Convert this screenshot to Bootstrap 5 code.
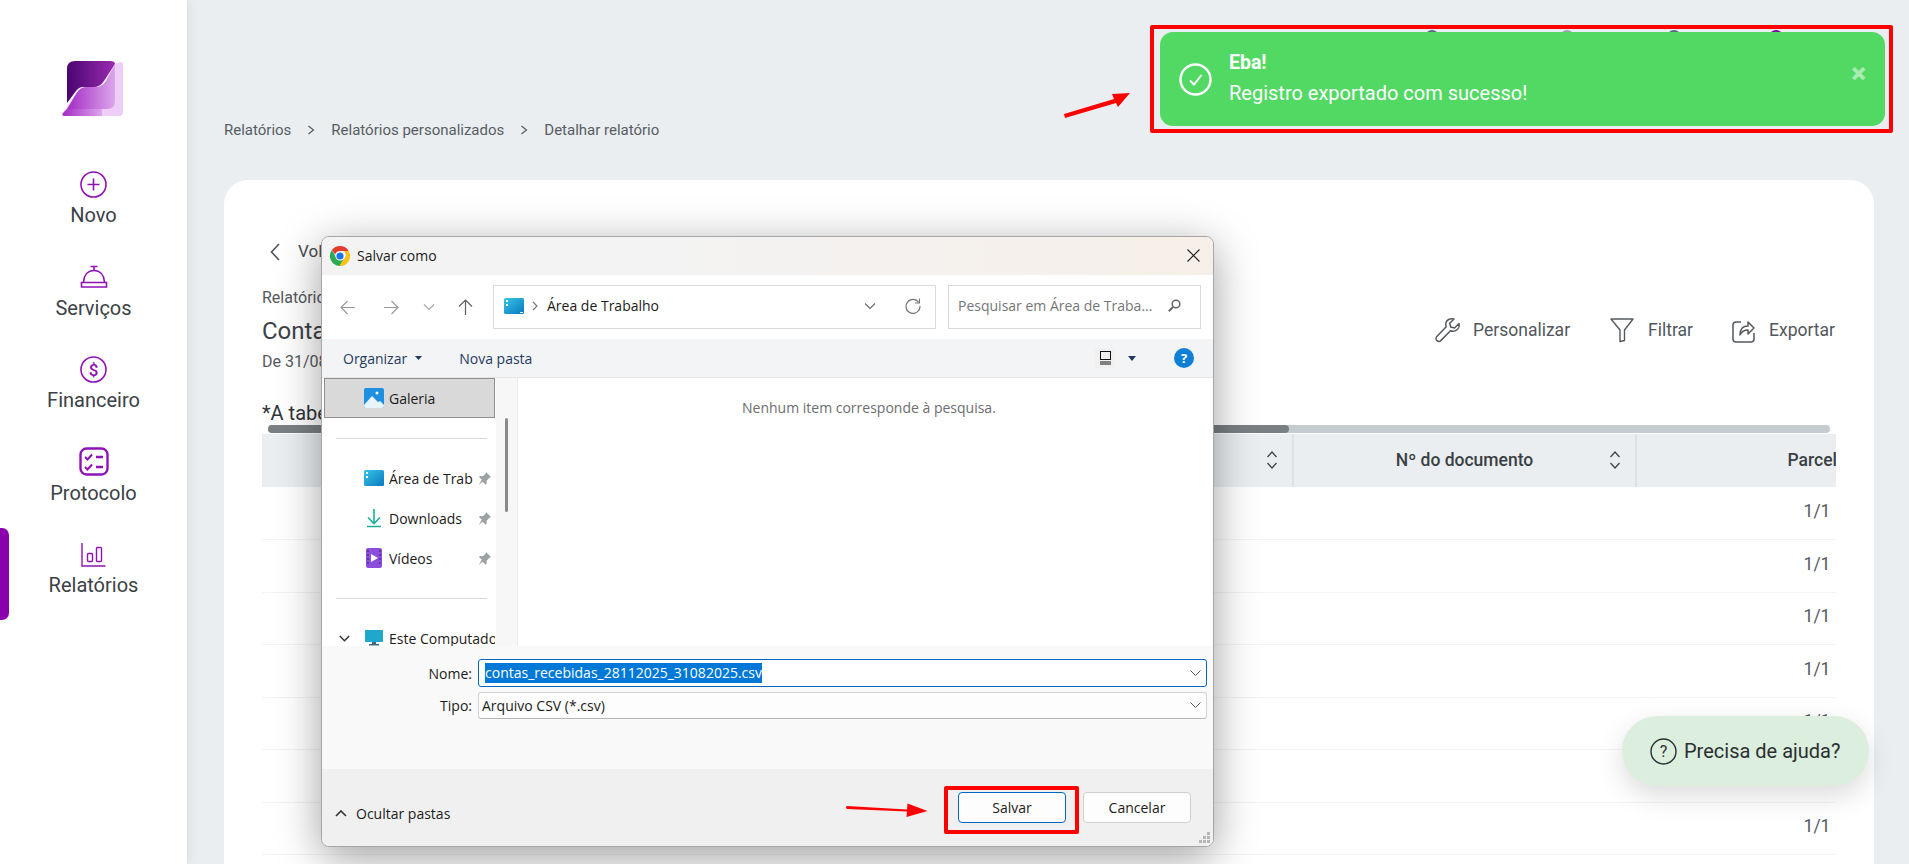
<!DOCTYPE html>
<html lang="pt-BR">
<head>
    <meta charset="UTF-8" />
    <title>Detalhar relatório</title>
    <link href="https://cdn.jsdelivr.net/npm/bootstrap@5.3.2/dist/css/bootstrap.min.css" rel="stylesheet">
    <style>
        html, body { height: 100%; }
        body { font-family: Roboto, "Liberation Sans", sans-serif; background: #eaeef1; overflow: hidden; color: #3d4248; }
        .app-shell { height: 864px; position: relative; overflow: hidden; }

        /* sidebar */
        .side-rail { width: 187px; flex: 0 0 187px; background: #fff; box-shadow: 3px 0 10px rgba(0,0,0,.06); padding-top: 61px; position: relative; z-index: 1; }
        .side-logo { width: 62px; height: 56px; display: block; margin: 0 auto 52px 62px; }
        .side-item { height: 92.5px; position: relative; }
        .side-icon { height: 30px; display: flex; align-items: center; justify-content: center; }
        .side-label { font-size: 20px; line-height: 24px; margin-top: 4px; color: #3c4146; }
        .side-active { position: absolute; left: 0; top: -11px; width: 9px; height: 92px; background: #8b00ad; border-radius: 0 7px 7px 0; }

        /* main */
        .main-area { flex: 0 0 1722px; width: 1722px; min-width: 0; padding-right: 35px; padding-left: 37px; }
        .peek-row { height: 29px; position: relative; }
        .peek-dot { position: absolute; top: 30px; width: 14px; height: 14px; border-radius: 50%; background: #5a6b80; }
        .peek-a { left: 1201px; }
        .peek-b { left: 1336px; background: #9aa3ab; }
        .peek-c { left: 1443px; }
        .peek-d { left: 1545px; background: #7a0c9c; }
        .crumbs { margin-top: 89px; height: 24px; font-size: 15px; color: #585d63; gap: 16px; }
        .report-panel { background: #fff; border-radius: 24px 24px 0 0; margin-top: 38px; height: 700px; padding: 60px 38px 0 38px; }
        .back-row { height: 24px; padding-left: 8px; font-size: 17px; color: #484d52; gap: 18px; }
        .report-head { margin-top: 24px; }
        .report-kicker { font-size: 16px; line-height: 20px; color: #55595e; }
        .report-title { font-size: 24px; line-height: 30px; margin-top: 8px; color: #3d4248; font-weight: 400; margin-bottom: 0; }
        .report-range { font-size: 16px; line-height: 20px; margin-top: 6px; color: #55595e; }
        .report-actions { font-size: 17.5px; color: #52575c; padding-right: 1px; }
        .act-personalizar { gap: 12px; margin-right: 40px; }
        .act-filtrar { gap: 14px; margin-right: 39px; }
        .act-exportar { gap: 14px; }
        .table-note { font-size: 20px; line-height: 24px; margin-top: 29px; color: #30353a; white-space: nowrap; }
        .h-track { height: 8px; margin: 0 6px 1px 6px; border-radius: 4px; background: #c5ccd0; }
        .h-thumb { height: 8px; width: 1021px; border-radius: 4px; background: #7a7f83; }
        .table-clip { overflow: hidden; }
        .report-table { table-layout: fixed; width: 1736px; margin: 0; }
        .report-table col.col-a { width: 1031px; }
        .report-table col.col-b { width: 343px; }
        .report-table col.col-c { width: 362px; }
        .report-table th { height: 53px; background: #eaeef1; border: 0; border-right: 2px solid #dee2e5; font-size: 17.5px; font-weight: 500; color: #3a3f44; text-align: center; vertical-align: middle; position: relative; padding: 0; }
        .report-table td { height: 52.5px; border: 0; border-bottom: 1px solid #f3f4f5; font-size: 17.5px; color: #55595e; text-align: center; vertical-align: middle; padding: 0 0 4px 0; }
        .sort-mark { position: absolute; right: 14px; top: 15px; }

        /* save dialog */
        .save-dialog { position: absolute; left: 321px; top: 236px; width: 893px; height: 611px; border-radius: 8px; background: #fff; border: 1px solid #a6a6a6; box-shadow: 0 10px 44px rgba(0,0,0,.38); overflow: hidden; z-index: 3; font-family: "Open Sans", "Noto Sans", sans-serif; font-size: 14px; color: #1b1b1b; }
        .dlg-title { height: 38px; background: linear-gradient(90deg, #f3f3f3 0%, #f3f3f3 35%, #f6efe9 100%); padding-left: 8px; gap: 7px; }
        .dlg-close { margin-left: auto; margin-right: 13px; }
        .dlg-nav { height: 65px; background: #fff; padding-left: 18px; }
        .nav-gap-a { margin-left: 29px; }
        .nav-gap-b { margin-left: 24px; }
        .nav-gap-c { margin-left: 23px; }
        .addr-box { height: 44px; border: 1px solid #d9d9d9; margin-left: 20px; width: 443px; padding: 0 14px 3px 10px; }
        .addr-sep { margin: 0 9px 0 8px; }
        .refresh-mark { margin-left: 29px; }
        .search-box { height: 44px; border: 1px solid #d9d9d9; margin-left: 12px; width: 253px; padding: 0 19px 3px 9px; color: #767676; }
        .dlg-tools { height: 39px; background: #f3f4f6; border-bottom: 1px solid #e5e5e5; padding-left: 21px; padding-right: 19px; color: #1f3a5f; }
        .tool-new { margin-left: 37px; }
        .view-btn { width: 20px; height: 20px; background: #f0f0f0; margin-left: auto; }
        .view-caret { margin-left: 13px; margin-right: 38px; }
        .help-dot { width: 20px; height: 20px; border-radius: 50%; background: #0f7fd6; color: #fff; font-size: 13px; font-weight: 700; line-height: 20px; text-align: center; }
        .dlg-panes { height: 268px; }
        .tree-pane { width: 174px; flex: 0 0 174px; padding-left: 2px; overflow: hidden; }
        .tree-sel { height: 40px; width: 171px; background: #d9d9d9; border: 1px solid #8f8f8f; padding-left: 39px; gap: 5px; }
        .tree-rule { height: 1px; background: #d9d9d9; width: 151px; margin-left: 12px; }
        .rule-top { margin-top: 20px; margin-bottom: 20px; }
        .rule-bot { margin-top: 19px; margin-bottom: 20px; }
        .tree-row { height: 40px; padding: 0 0 2px 40px; gap: 5px; width: 171px; white-space: nowrap; }
        .tree-name { width: 84px; overflow: hidden; }
        .tree-row svg { flex-shrink: 0; }
        .tree-pc { padding-left: 15px; gap: 6px; overflow: hidden; }
        .pc-chevron { margin-right: 9px; }
        .tree-track { width: 22px; flex: 0 0 22px; background: #f7f7f7; border-right: 1px solid #ececec; position: relative; padding: 40px 0 0 9px; }
        .tree-thumb { width: 3px; height: 94px; background: #8a8a8a; border-radius: 2px; }
        .empty-msg { padding: 19px 0 0 224px; color: #6d6d6d; flex: 1; }
        .dlg-form { height: 124px; background: #f9f9f9; padding-top: 13px; }
        .form-line { height: 28px; margin-bottom: 4px; }
        .form-lbl { width: 156px; text-align: right; padding-right: 6px; flex: 0 0 156px; }
        .name-input { width: 729px; height: 28px; background: #fff; border: 1px solid #0067c0; border-radius: 3px; padding: 0 5px 0 6px; }
        .type-input { width: 729px; height: 27px; background: #fdfdfd; border: 1px solid #d3d3d3; border-bottom-color: #b5b5b5; border-radius: 3px; padding: 0 5px 0 3px; }
        .sel-text { background: #0078d7; color: #fff; line-height: 20px; }
        .dlg-foot { height: 77px; background: #f0f0f0; padding: 0 22px 0 13px; position: relative; }
        .fold-toggle { gap: 9px; margin-top: 11px; }
        .win-btn { width: 108px; height: 31px; border: 1px solid #cfcfcf; border-radius: 4px; background: #fdfdfd; font-family: inherit; font-size: 14px; padding: 0; color: #1b1b1b; }
        .win-primary { border-color: #0067c0; margin-left: auto; }
        .win-second { margin-left: 17px; }
        .grip-mark { position: absolute; right: 2px; bottom: 2px; }

        /* things lying over the page */
        .mark-box { position: absolute; border: 4px solid #ff0000; border-radius: 2px; z-index: 5; }
        .mark-toast { left: 1150px; top: 25px; width: 743px; height: 108px; }
        .mark-save { left: 944px; top: 786px; width: 135px; height: 48px; }
        .mark-arrow { position: absolute; z-index: 5; }
        .arrow-toast { left: 1062px; top: 90px; }
        .arrow-save { left: 845px; top: 800px; }
        .ok-toast { position: absolute; left: 1160px; top: 32px; width: 725px; height: 94px; background: #52d964; border-radius: 13px; color: #fff; z-index: 4; padding-left: 19px; font-size: 20px; }
        .toast-text { margin-left: 17px; margin-top: -2px; }
        .toast-head { font-weight: 700; line-height: 24px; font-size: 19.5px; margin-bottom: 6px; }
        .toast-body-text { line-height: 24px; }
        .toast-x { position: absolute; right: 19px; top: 24px; color: #a9ecb2; font-size: 28px; font-weight: 900; line-height: 36px; }
        .help-pill { position: absolute; left: 1622px; top: 716px; width: 247px; height: 70px; border-radius: 35px; background: #dceedd; box-shadow: 0 10px 28px rgba(0,0,0,.14); padding-left: 28px; gap: 7px; font-size: 20px; color: #2b2f33; z-index: 2; }
    </style>
</head>
<body>
<div class="app-shell d-flex">

    <!-- Sidebar -->
    <aside class="side-rail">
        <svg class="side-logo" viewBox="0 0 62 56">
            <defs>
                <linearGradient id="logoDark" x1="0" x2="1" y1="0" y2="0"><stop offset="0" stop-color="#4a0670"/><stop offset="1" stop-color="#9a2ab0"/></linearGradient>
                <linearGradient id="logoMid" x1="0" x2="1" y1="0" y2="0"><stop offset="0" stop-color="#a42cc4"/><stop offset="1" stop-color="#dca6ec"/></linearGradient>
            </defs>
            <path d="M5 8 Q5 0 13 0 H48 Q53 0 53 3 L42 20 Q38 26 32 26 H21 Q17 26 14 30 L5 42 Z" fill="url(#logoDark)"/>
            <path d="M53 3 Q56 1 58 1 Q61 1 61 4 V51 Q61 55 57 55 H3 Q-1 55 1 52 L14 33 Q18 26 24 26 H34 Q40 26 44 20 Z" fill="#eecdf9"/>
            <path d="M53 3 V40 Q53 48 45 48 H5 L14 33 Q18 26 24 26 H34 Q40 26 44 20 Z" fill="url(#logoMid)"/>
            <path d="M5 48 H40 V55 H3 Q-1 55 1 52 Z" fill="url(#logoMid)"/>
        </svg>
        <div class="side-item text-center">
            <div class="side-icon">
                <svg width="27" height="27" viewBox="0 0 27 27" fill="none" stroke="#8f12b5" stroke-width="1.6"><circle cx="13.5" cy="13.5" r="12.5"/><path d="M13.5 7.5v12M7.5 13.5h12"/></svg>
            </div>
            <div class="side-label">Novo</div>
        </div>
        <div class="side-item text-center">
            <div class="side-icon">
                <svg width="28" height="24" viewBox="0 0 28 24" fill="none" stroke="#8f12b5" stroke-width="1.6"><path d="M10.5 1.5h7M14 1.5v4M3.5 17C4 10 8 5.5 14 5.5S24 10 24.5 17M1.5 17.5h25v4.5h-25z"/></svg>
            </div>
            <div class="side-label">Serviços</div>
        </div>
        <div class="side-item text-center">
            <div class="side-icon">
                <svg width="27" height="27" viewBox="0 0 27 27" fill="none" stroke="#8f12b5" stroke-width="1.6"><circle cx="13.5" cy="13.5" r="12.5"/><text x="13.5" y="19.5" font-family="Roboto, sans-serif" font-size="17" font-weight="500" text-anchor="middle" fill="#8f12b5" stroke="none">$</text></svg>
            </div>
            <div class="side-label">Financeiro</div>
        </div>
        <div class="side-item text-center">
            <div class="side-icon">
                <svg width="30" height="29" viewBox="0 0 30 29" fill="none" stroke="#8f12b5" stroke-width="2.4"><rect x="1.5" y="1.5" width="27" height="26" rx="6"/><path d="M6 10l2.5 2.5L13 7.5M6 20l2.5 2.5L13 17.5" stroke-width="2"/><path d="M17 10h7M17 20h7"/></svg>
            </div>
            <div class="side-label">Protocolo</div>
        </div>
        <div class="side-item text-center">
            <span class="side-active"></span>
            <div class="side-icon">
                <svg width="25" height="25" viewBox="0 0 25 25" fill="none" stroke="#8f12b5" stroke-width="1.4"><path d="M1 1v23h23.5"/><rect x="6.5" y="11.5" width="5" height="8" rx="1"/><rect x="15.5" y="5.5" width="5" height="14" rx="1"/></svg>
            </div>
            <div class="side-label">Relatórios</div>
        </div>
    </aside>

    <!-- Main Content -->
    <main class="main-area">
        <div class="peek-row">
            <span class="peek-dot peek-a"></span><span class="peek-dot peek-b"></span><span class="peek-dot peek-c"></span><span class="peek-dot peek-d"></span>
        </div>
        <nav class="crumbs d-flex align-items-center">
            <span>Relatórios</span>
            <svg width="8" height="10" viewBox="0 0 8 10" fill="none" stroke="#55595e" stroke-width="1.2"><path d="M1.5 1l5 4-5 4"/></svg>
            <span>Relatórios personalizados</span>
            <svg width="8" height="10" viewBox="0 0 8 10" fill="none" stroke="#55595e" stroke-width="1.2"><path d="M1.5 1l5 4-5 4"/></svg>
            <span>Detalhar relatório</span>
        </nav>

        <section class="report-panel">
            <div class="back-row d-flex align-items-center">
                <svg width="10" height="18" viewBox="0 0 10 18" fill="none" stroke="#484d52" stroke-width="1.5"><path d="M9 1L1.5 9 9 17"/></svg>
                <span>Voltar</span>
            </div>
            <div class="report-head d-flex justify-content-between align-items-center">
                <div>
                    <div class="report-kicker">Relatórios personalizados</div>
                    <h1 class="report-title">Contas recebidas</h1>
                    <div class="report-range">De 31/08/2025 até 28/11/2025</div>
                </div>
                <div class="report-actions d-flex align-items-center">
                    <div class="act-personalizar d-flex align-items-center">
                        <svg width="26" height="26" viewBox="0 0 26 26" fill="none" stroke="#55595e" stroke-width="1.5" stroke-linejoin="round"><path d="M24 6.5l-4.5 4.5-3.8-1-1-3.8L19 2c-3.500-1-7 .5-8 3.500-.5 1.700-.3 3.200.2 4.300L1.800 19.600c-1.200 1.300-1 3 .2 4 1.200 1.100 2.900 1.100 4-.2l9.500-9.600c1.300.6 3 .7 4.500.1 3-1.200 4.900-4.300 4-7.400z"/></svg>
                        <span>Personalizar</span>
                    </div>
                    <div class="act-filtrar d-flex align-items-center">
                        <svg width="24" height="26" viewBox="0 0 24 26" fill="none" stroke="#55595e" stroke-width="1.4" stroke-linejoin="round"><path d="M1 2h22l-8.500 11v10.500l-4.500 1V13z"/></svg>
                        <span>Filtrar</span>
                    </div>
                    <div class="act-exportar d-flex align-items-center">
                        <svg width="23" height="26" viewBox="0 0 23 26" fill="none" stroke="#55595e" stroke-width="1.5" stroke-linejoin="round"><path d="M9 5H4Q1 5 1 8v14q0 3 3 3h15q3 0 3-3v-6"/><path d="M8 18c0-6 3-9 8-9V5l6 6-6 6v-4c-3 0-6 1-8 5z"/></svg>
                        <span>Exportar</span>
                    </div>
                </div>
            </div>
            <div class="table-note">*A tabela abaixo exibe apenas uma prévia do relatório</div>
            <div class="h-track"><div class="h-thumb"></div></div>
            <div class="table-clip">
                <table class="report-table table">
                    <colgroup><col class="col-a"><col class="col-b"><col class="col-c"></colgroup>
                    <thead>
                        <tr>
                            <th>
                                <svg class="sort-mark" width="12" height="22" viewBox="0 0 12 22" fill="none" stroke="#3f4449" stroke-width="1.3"><path d="M1.500 8L6 3l4.500 5M1.500 14L6 19l4.500-5"/></svg>
                            </th>
                            <th>Nº do documento
                                <svg class="sort-mark" width="12" height="22" viewBox="0 0 12 22" fill="none" stroke="#3f4449" stroke-width="1.3"><path d="M1.500 8L6 3l4.500 5M1.500 14L6 19l4.500-5"/></svg>
                            </th>
                            <th>Parcela</th>
                        </tr>
                    </thead>
                    <tbody>
                        <tr><td></td><td></td><td>1/1</td></tr>
                        <tr><td></td><td></td><td>1/1</td></tr>
                        <tr><td></td><td></td><td>1/1</td></tr>
                        <tr><td></td><td></td><td>1/1</td></tr>
                        <tr><td></td><td></td><td>1/1</td></tr>
                        <tr><td></td><td></td><td>1/1</td></tr>
                        <tr><td></td><td></td><td>1/1</td></tr>
                    </tbody>
                </table>
            </div>
        </section>
    </main>

    <!-- Windows "Salvar como" dialog -->
    <div class="save-dialog d-flex flex-column">
        <div class="dlg-title d-flex align-items-center">
            <svg width="20" height="20" viewBox="0 0 20 20"><path d="M10 0a10 10 0 0 1 8.660 5H10a5 5 0 0 0-4.800 3.600L1.900 4.100A10 10 0 0 1 10 0z" fill="#e33b2e"/><path d="M18.660 5A10 10 0 0 1 9.500 20l3.900-6.700a5 5 0 0 0 .4-8.300z" fill="#fbc116"/><path d="M1.900 4.100l4.400 7.700a5 5 0 0 0 7.100 1.500L9.500 20A10 10 0 0 1 1.900 4.100z" fill="#2da94f"/><circle cx="10" cy="10" r="4.600" fill="#fff"/><circle cx="10" cy="10" r="3.600" fill="#1a73e8"/></svg>
            <span>Salvar como</span>
            <svg class="dlg-close" width="13" height="13" viewBox="0 0 13 13" fill="none" stroke="#222" stroke-width="1.100"><path d="M.5.5l12 12M12.500.5l-12 12"/></svg>
        </div>
        <div class="dlg-nav d-flex align-items-center">
            <svg width="15" height="15" viewBox="0 0 15 15" fill="none" stroke="#9a9a9a" stroke-width="1.200"><path d="M15 7.500H1M7.500 1L1 7.500 7.500 14"/></svg>
            <svg class="nav-gap-a" width="15" height="15" viewBox="0 0 15 15" fill="none" stroke="#9a9a9a" stroke-width="1.200"><path d="M0 7.500h14M7.500 1L14 7.500 7.500 14"/></svg>
            <svg class="nav-gap-b" width="12" height="8" viewBox="0 0 12 8" fill="none" stroke="#a8a8a8" stroke-width="1.200"><path d="M1 1.500l5 5 5-5"/></svg>
            <svg class="nav-gap-c" width="15" height="16" viewBox="0 0 15 16" fill="none" stroke="#5f5f5f" stroke-width="1.200"><path d="M7.500 16V1M1 7.500L7.500 1 14 7.500"/></svg>
            <div class="addr-box d-flex align-items-center">
                <svg width="20" height="16" viewBox="0 0 20 16"><defs><linearGradient id="deskG" x1="0" x2="1" y1="0" y2="1"><stop offset="0" stop-color="#36c6e4"/><stop offset="1" stop-color="#0a78c2"/></linearGradient></defs><rect width="20" height="16" rx="1.500" fill="url(#deskG)"/><rect x="2" y="2" width="2" height="2" fill="#fff"/><rect x="2" y="6" width="2" height="2" fill="#fff"/><rect x="16" y="14" width="3" height="1" fill="#dff"/></svg>
                <svg class="addr-sep" width="6" height="10" viewBox="0 0 6 10" fill="none" stroke="#777" stroke-width="1.200"><path d="M1 1l4 4-4 4"/></svg>
                <span>Área de Trabalho</span>
                <svg class="ms-auto" width="12" height="8" viewBox="0 0 12 8" fill="none" stroke="#666" stroke-width="1.100"><path d="M1 1.500l5 5 5-5"/></svg>
                <svg class="refresh-mark" width="16" height="16" viewBox="0 0 16 16" fill="none" stroke="#777" stroke-width="1.200"><path d="M13.800 4.500A7 7 0 1 0 15 8"/><path d="M14.500 0.500V5H10" stroke-width="1.100"/></svg>
            </div>
            <div class="search-box d-flex align-items-center">
                <span>Pesquisar em Área de Traba...</span>
                <svg class="ms-auto" width="13" height="13" viewBox="0 0 13 13" fill="none" stroke="#666" stroke-width="1.500"><circle cx="8" cy="5" r="3.800"/><path d="M5 8l-4.200 4.200" stroke-width="2"/></svg>
            </div>
        </div>
        <div class="dlg-tools d-flex align-items-center">
            <span>Organizar</span>
            <svg class="ms-2" width="7" height="4" viewBox="0 0 7 4"><path d="M0 0h7L3.500 4z" fill="#1f3a5f"/></svg>
            <span class="tool-new">Nova pasta</span>
            <div class="view-btn d-flex align-items-center justify-content-center">
                <svg width="13" height="14" viewBox="0 0 13 14" fill="none" stroke="#111" stroke-width="1"><rect x="1.500" y=".5" width="10" height="8"/><path d="M1 11h11M1 13h11"/></svg>
            </div>
            <svg class="view-caret" width="8" height="5" viewBox="0 0 8 5"><path d="M0 0h8L4 5z" fill="#1f3a5f"/></svg>
            <div class="help-dot">?</div>
        </div>
        <div class="dlg-panes d-flex">
            <div class="tree-pane">
                <div class="tree-sel d-flex align-items-center">
                    <svg width="20" height="20" viewBox="0 0 20 20"><rect width="20" height="20" rx="2" fill="#1f8fe0"/><path d="M0 17l8-9 6 6 2-1 4 4v1q0 2-2 2H2q-2 0-2-2z" fill="#e8f4fb"/><circle cx="13" cy="5" r="1.500" fill="#fff"/></svg>
                    <span>Galeria</span>
                </div>
                <div class="tree-rule rule-top"></div>
                <div class="tree-row d-flex align-items-center">
                    <svg width="20" height="16" viewBox="0 0 20 16"><rect width="20" height="16" rx="1.500" fill="url(#deskG)"/><rect x="2" y="2" width="2" height="2" fill="#fff"/><rect x="2" y="6" width="2" height="2" fill="#fff"/></svg>
                    <span class="tree-name">Área de Trabalho</span>
                    <svg width="13" height="13" viewBox="0 0 13 13" fill="#9aa0a4"><path d="M8 0l5 5-1.500.8-3 3 .2 3-1 1-3-3-4 3.200L3.800 7.800 1 5l1-1 3 .2 3-3z"/></svg>
                </div>
                <div class="tree-row d-flex align-items-center">
                    <svg width="20" height="20" viewBox="0 0 20 20" fill="none" stroke="#1cb09a" stroke-width="1.600"><path d="M10 1v14M4 9.500l6 6 6-6M3 18.500h14"/></svg>
                    <span class="tree-name">Downloads</span>
                    <svg width="13" height="13" viewBox="0 0 13 13" fill="#9aa0a4"><path d="M8 0l5 5-1.500.8-3 3 .2 3-1 1-3-3-4 3.200L3.800 7.800 1 5l1-1 3 .2 3-3z"/></svg>
                </div>
                <div class="tree-row d-flex align-items-center">
                    <svg width="20" height="20" viewBox="0 0 20 20"><rect x="2" width="16" height="20" rx="2" fill="#8b4fdc"/><path d="M7 6l7 4-7 4z" fill="#fff"/><path d="M3.500 2h1v2h-1zM3.500 6h1v2h-1zM3.500 10h1v2h-1zM3.500 14h1v2h-1zM15.500 2h1v2h-1zM15.500 6h1v2h-1zM15.500 10h1v2h-1zM15.500 14h1v2h-1z" fill="#3b1a78"/></svg>
                    <span class="tree-name">Vídeos</span>
                    <svg width="13" height="13" viewBox="0 0 13 13" fill="#9aa0a4"><path d="M8 0l5 5-1.500.8-3 3 .2 3-1 1-3-3-4 3.200L3.800 7.800 1 5l1-1 3 .2 3-3z"/></svg>
                </div>
                <div class="tree-rule rule-bot"></div>
                <div class="tree-row tree-pc d-flex align-items-center">
                    <svg class="pc-chevron" width="11" height="7" viewBox="0 0 11 7" fill="none" stroke="#333" stroke-width="1.500"><path d="M.8 1l4.700 4.700L10.200 1"/></svg>
                    <svg width="18" height="16" viewBox="0 0 18 16"><rect width="18" height="12" rx="1" fill="#1fa8cc"/><path d="M7 12h4v2H7zM4 14h10v1.500H4z" fill="#3c6b85"/></svg>
                    <span>Este Computador</span>
                </div>
            </div>
            <div class="tree-track"><div class="tree-thumb"></div></div>
            <div class="empty-msg">Nenhum item corresponde à pesquisa.</div>
        </div>
        <div class="dlg-form">
            <div class="form-line d-flex align-items-center">
                <div class="form-lbl">Nome:</div>
                <div class="name-input d-flex align-items-center">
                    <span class="sel-text">contas_recebidas_28112025_31082025.csv</span>
                    <svg class="ms-auto" width="11" height="6" viewBox="0 0 11 6" fill="none" stroke="#555" stroke-width="1"><path d="M.5.5l5 5 5-5"/></svg>
                </div>
            </div>
            <div class="form-line d-flex align-items-center">
                <div class="form-lbl">Tipo:</div>
                <div class="type-input d-flex align-items-center">
                    <span>Arquivo CSV (*.csv)</span>
                    <svg class="ms-auto" width="11" height="6" viewBox="0 0 11 6" fill="none" stroke="#555" stroke-width="1"><path d="M.5.5l5 5 5-5"/></svg>
                </div>
            </div>
        </div>
        <div class="dlg-foot d-flex align-items-center">
            <div class="fold-toggle d-flex align-items-center">
                <svg width="12" height="7" viewBox="0 0 12 7" fill="none" stroke="#333" stroke-width="1.600"><path d="M1 6l5-5 5 5"/></svg>
                <span>Ocultar pastas</span>
            </div>
            <button class="win-btn win-primary" type="button">Salvar</button>
            <button class="win-btn win-second" type="button">Cancelar</button>
            <svg class="grip-mark" width="12" height="12" viewBox="0 0 12 12" fill="#b5b5b5"><path d="M8 0h3v3H8zM4 4h3v3H4zM8 4h3v3H8zM0 8h3v3H0zM4 8h3v3H4zM8 8h3v3H8z"/></svg>
        </div>
    </div>

    <!-- Toast -->
    <div class="ok-toast d-flex align-items-center">
        <svg width="33" height="33" viewBox="0 0 33 33" fill="none" stroke="#fff" stroke-width="2.4"><circle cx="16.500" cy="16.500" r="15"/><path d="M11 17.500l4 4 7.500-9.500" stroke-width="1.900"/></svg>
        <div class="toast-text">
            <div class="toast-head">Eba!</div>
            <div class="toast-body-text">Registro exportado com sucesso!</div>
        </div>
        <span class="toast-x">×</span>
    </div>

    <div class="help-pill d-flex align-items-center">
        <svg width="27" height="27" viewBox="0 0 27 27" fill="none" stroke="#2b2f33" stroke-width="1.400"><circle cx="13.500" cy="13.500" r="12.500"/><text x="13.500" y="19" font-family="Roboto, sans-serif" font-size="16" text-anchor="middle" fill="#2b2f33" stroke="none">?</text></svg>
        <span>Precisa de ajuda?</span>
    </div>

    <!-- Red annotations -->
    <div class="mark-box mark-toast"></div>
    <div class="mark-box mark-save"></div>
    <svg class="mark-arrow arrow-toast" width="70" height="28" viewBox="0 0 70 28" fill="#ff0000"><path d="M2 24l50-15-2-5 18-1-12 14-2-4-51 15z"/></svg>
    <svg class="mark-arrow arrow-save" width="84" height="20" viewBox="0 0 84 20" fill="#ff0000"><path d="M2 6l60 3.500.5-6 20 7.500-21 6 .5-5.500-60-2.500q-2-1.500 0-3z"/></svg>
</div>
<script src="https://cdn.jsdelivr.net/npm/bootstrap@5.3.2/dist/js/bootstrap.bundle.min.js"></script>
</body>
</html>
